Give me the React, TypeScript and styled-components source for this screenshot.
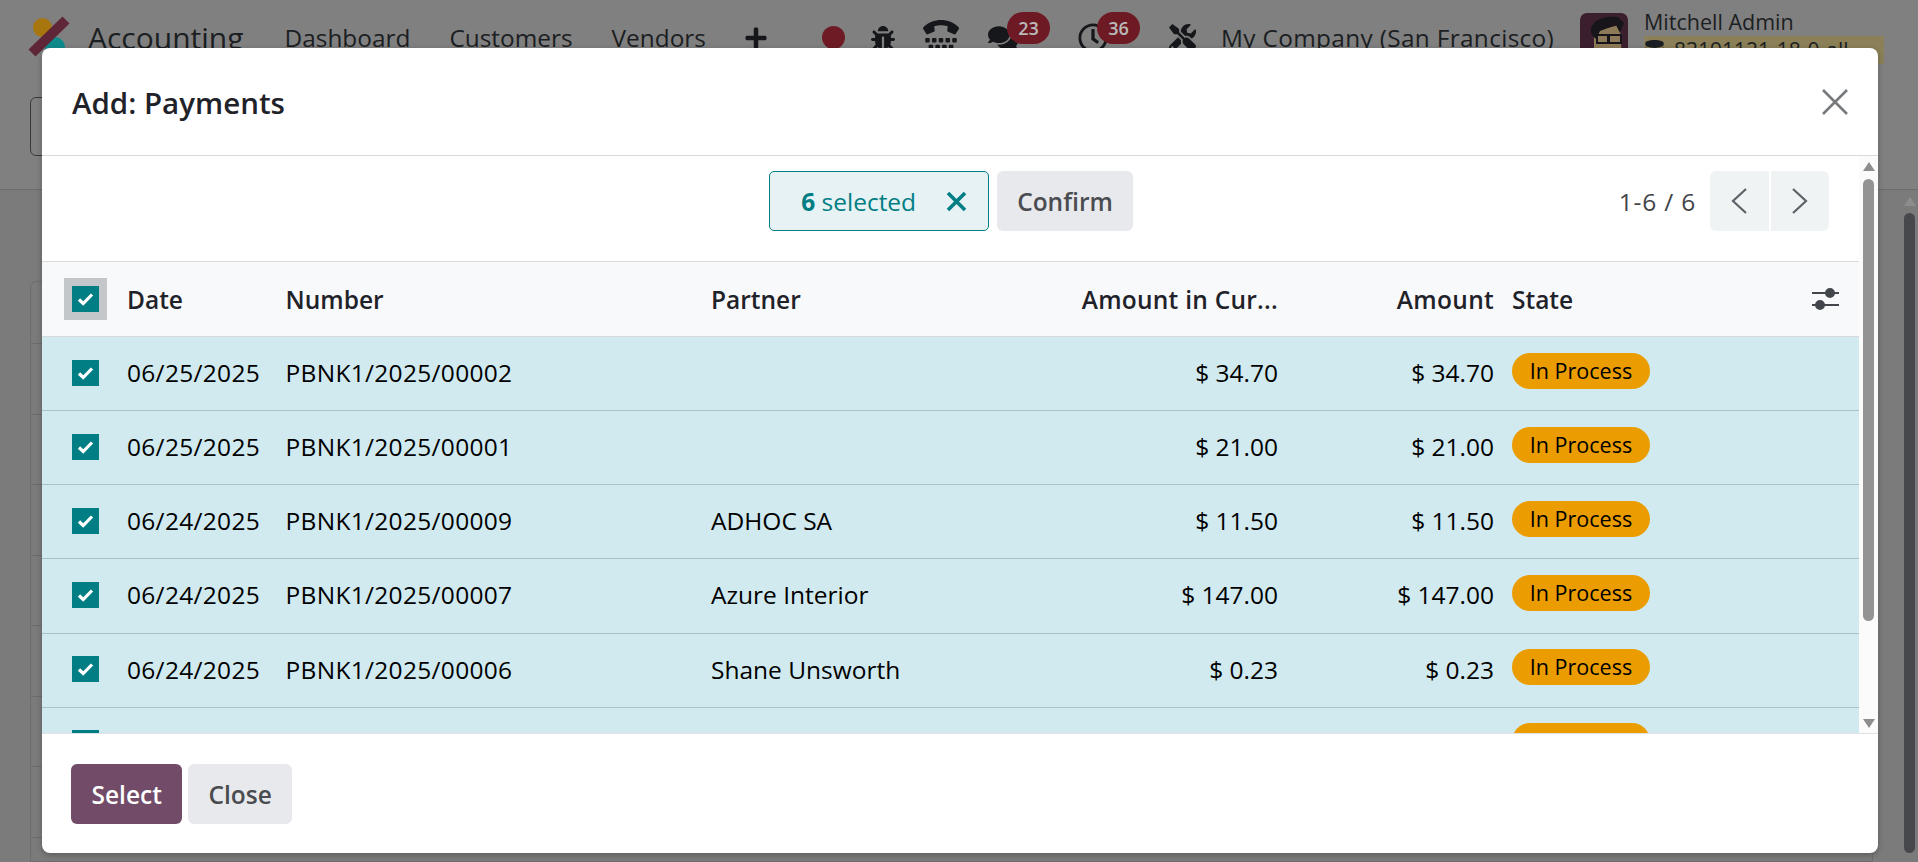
import styled, { createGlobalStyle } from 'styled-components';
import { FaBug, FaComments, FaDatabase, FaPlus, FaRegClock, FaTools, FaTty } from 'react-icons/fa';

type Payment = {
  id: number;
  date: string;
  number: string;
  partner: string;
  amount: string;
  state: string;
};

const payments: Payment[] = [
  { id: 1, date: '06/25/2025', number: 'PBNK1/2025/00002', partner: '', amount: '$ 34.70', state: 'In Process' },
  { id: 2, date: '06/25/2025', number: 'PBNK1/2025/00001', partner: '', amount: '$ 21.00', state: 'In Process' },
  { id: 3, date: '06/24/2025', number: 'PBNK1/2025/00009', partner: 'ADHOC SA', amount: '$ 11.50', state: 'In Process' },
  { id: 4, date: '06/24/2025', number: 'PBNK1/2025/00007', partner: 'Azure Interior', amount: '$ 147.00', state: 'In Process' },
  { id: 5, date: '06/24/2025', number: 'PBNK1/2025/00006', partner: 'Shane Unsworth', amount: '$ 0.23', state: 'In Process' },
  // only the top of this row shows above the footer
  { id: 6, date: '', number: '', partner: '', amount: '', state: '' },
];

const GlobalStyle = createGlobalStyle`
  html, body {
    margin: 0;
    padding: 0;
    overflow: hidden;
  }

  body {
    font-family: "Open Sans", "Noto Sans", sans-serif;
    font-size: 24.5px;
    color: #000;
  }

  * {
    box-sizing: border-box;
  }
`;

const Page = styled.div`
  position: relative;
  display: flex;
  flex-direction: column;
  width: 1918px;
  height: 862px;
  overflow: hidden;
  background: #808080;
`;

/* what sits dimmed behind the dialog */
const Navbar = styled.header`
  display: flex;
  flex: none;
  align-items: center;
  height: 75px;
  color: #1b1e22;
  font-size: 24.4px;
  white-space: nowrap;
`;

const AppLogo = styled.svg`
  flex: none;
  width: 44px;
  height: 50px;
  margin-left: 28px;
`;

const AppName = styled.span`
  margin: 0 41px 0 16px;
  font-size: 30px;
`;

const NavLink = styled.span`
  margin-right: 39px;
`;

const NavIcon = styled.span<{ $width: number; $gap: number; $size: number }>`
  position: relative;
  display: flex;
  flex: none;
  justify-content: center;
  width: ${({ $width }) => $width}px;
  margin-right: ${({ $gap }) => $gap}px;
  color: #15171a;
  font-size: ${({ $size }) => $size}px;
`;

const RecordDot = styled.span`
  width: 23px;
  height: 23px;
  border-radius: 50%;
  background: #6e1b25;
`;

const CountBadge = styled.span<{ $left: number }>`
  position: absolute;
  top: -11px;
  left: ${({ $left }) => $left}px;
  width: 43px;
  height: 32px;
  border-radius: 16px;
  background: #6e1a24;
  color: #b9b9b9;
  font-size: 18px;
  font-weight: 600;
  line-height: 32px;
  text-align: center;
`;

const CompanyName = styled.span`
  width: 359px;
  letter-spacing: 0.33px;
`;

const Avatar = styled.svg`
  flex: none;
  align-self: flex-start;
  width: 48px;
  height: 48px;
  margin-top: 13px;
`;

const UserBlock = styled.div`
  display: flex;
  flex-direction: column;
  align-self: flex-start;
  margin: 8px 0 0 16px;
  font-size: 21.5px;
  line-height: 28px;
`;

const DatabaseTag = styled.span`
  display: flex;
  align-items: center;
  gap: 9px;
  width: 240px;
  background: #8b8058;
  font-size: 21px;
`;

const ControlPanel = styled.div`
  flex: none;
  height: 115px;
  padding: 22px 0 0 30px;
  border-bottom: 1px solid #6c6c6c;
`;

const SearchBox = styled.div`
  width: 200px;
  height: 59px;
  border: 1px solid #3a3a3a;
  border-radius: 6px;
`;

const Content = styled.div`
  display: flex;
  flex: 1;
  min-height: 0;
  background: #7b7b7b;
`;

const BackList = styled.div`
  flex: 1;
  margin: 91px 30px 0;
  border: 1px solid #6d6d6d;
  border-radius: 6px 0 0 0;
`;

const BackRow = styled.div<{ $head?: boolean }>`
  height: ${({ $head }) => ($head ? 62 : 70.5)}px;
  border-bottom: 1px solid #6d6d6d;
`;

const OuterScrollbar = styled.div`
  display: flex;
  flex: none;
  flex-direction: column;
  align-items: center;
  width: 13px;
  margin-right: 2px;
  padding-top: 7px;
`;

const OuterThumb = styled.div`
  width: 11px;
  height: 640px;
  margin-top: 7px;
  border-radius: 6px;
  background: #47484c;
`;

/* the dialog */
const Modal = styled.section`
  position: absolute;
  top: 48px;
  left: 42px;
  display: flex;
  flex-direction: column;
  width: 1836px;
  height: 805px;
  overflow: hidden;
  border-radius: 8px;
  background: #fff;
  box-shadow: 0 2px 6px rgba(0, 0, 0, 0.25);
`;

const ModalHeader = styled.header`
  display: flex;
  flex: none;
  align-items: center;
  justify-content: space-between;
  height: 108px;
  padding: 0 30px 0 30px;
  border-bottom: 1px solid #d8dadd;
`;

const ModalTitle = styled.h4`
  margin: 1px 0 0;
  color: #1f2329;
  font-size: 29.5px;
  font-weight: 600;
`;

const CloseIcon = styled.svg`
  width: 26px;
  height: 26px;
  stroke: #777a7d;
  stroke-width: 2.6;
`;

const ModalBody = styled.div`
  display: flex;
  flex: 1;
  min-height: 0;
`;

const BodyScroll = styled.div`
  flex: 1;
  min-width: 0;
  overflow: hidden;
`;

const Toolbar = styled.div`
  display: grid;
  grid-template-columns: 1fr auto 1fr;
  align-items: start;
  height: 105px;
  padding: 15px 30px 0 0;
`;

const SelectionGroup = styled.div`
  display: flex;
  grid-column: 2;
  gap: 8px;
  margin-left: 31px;
`;

const SelectionChip = styled.div`
  display: flex;
  align-items: center;
  width: 220px;
  height: 60px;
  padding-left: 31px;
  border: 1px solid #017e84;
  border-radius: 5px;
  background: #e6f2f3;
  color: #017e84;
`;

const SelectionLabel = styled.span`
  width: 145px;
  b {
    font-weight: 700;
  }
`;

const ClearIcon = styled.svg`
  width: 21px;
  height: 21px;
  stroke: #017e84;
  stroke-width: 3.6;
`;

const Button = styled.button<{ $primary?: boolean }>`
  height: 60px;
  padding: 0 ${({ $primary }) => ($primary ? 20.5 : 20)}px;
  border: 0;
  border-radius: 6px;
  background: ${({ $primary }) => ($primary ? '#714b67' : '#e7e9ed')};
  color: ${({ $primary }) => ($primary ? '#fff' : '#4a4c50')};
  font-family: inherit;
  font-size: 24.5px;
  font-weight: 600;
`;

const Pager = styled.div`
  display: flex;
  grid-column: 3;
  align-items: center;
  justify-content: flex-end;
  color: #3f4448;
`;

const PagerCount = styled.span`
  margin-right: 14px;
  letter-spacing: 0.8px;
`;

const PagerButton = styled.button<{ $next?: boolean }>`
  display: flex;
  align-items: center;
  justify-content: center;
  width: 58.5px;
  height: 60px;
  margin-left: ${({ $next }) => ($next ? 2 : 0)}px;
  padding: 0;
  border: 0;
  border-radius: ${({ $next }) => ($next ? '0 6px 6px 0' : '6px 0 0 6px')};
  background: #f0f3f4;
`;

const Chevron = styled.svg`
  width: 17px;
  height: 26px;
  fill: none;
  stroke: #5c6268;
  stroke-width: 2.2;
`;

const gridColumns = '85px 158.5px 425.5px 300px 267px 216px 1fr 69px';

const HeaderRow = styled.div`
  display: grid;
  grid-template-columns: ${gridColumns};
  align-items: center;
  height: 76px;
  border-top: 1px solid #d8dadd;
  border-bottom: 1px solid #d8dadd;
  background: #f8f9fb;
  color: #1f2329;
  font-weight: 600;
`;

const DataRow = styled.div`
  display: grid;
  grid-template-columns: ${gridColumns};
  align-items: center;
  height: 74.15px;
  padding-bottom: 2px;
  border-bottom: 1px solid #a6c3cb;
  background: #d1eaef;
`;

const CheckCell = styled.div`
  display: flex;
  padding-left: 30px;
`;

const Checkbox = styled.span<{ $focused?: boolean }>`
  display: flex;
  align-items: center;
  justify-content: center;
  width: 27px;
  height: 26px;
  background: #017e84;
  box-shadow: ${({ $focused }) => ($focused ? '0 0 0 8px #c3c7c9' : 'none')};
`;

const CheckMark = styled.svg`
  width: 17px;
  height: 14px;
  fill: none;
  stroke: #fff;
  stroke-width: 3.2;
`;

const Cell = styled.div<{ $right?: boolean; $spacing?: number }>`
  letter-spacing: ${({ $spacing = 0 }) => $spacing}px;
  text-align: ${({ $right }) => ($right ? 'right' : 'left')};
  white-space: nowrap;
`;

const StateCell = styled.div`
  display: flex;
  padding: 0 0 0 18px;
`;

const StateBadge = styled.span`
  width: 138px;
  height: 36px;
  margin-bottom: 4px;
  border-radius: 18px;
  background: #ea9c00;
  color: #000;
  font-size: 21.5px;
  font-weight: 500;
  line-height: 35px;
  text-align: center;
`;

const OptionalCell = styled.div`
  display: flex;
  justify-content: center;
  padding-left: 1px;
`;

const ColumnsIcon = styled.svg`
  width: 27px;
  height: 24px;
  stroke: #43474c;
  stroke-width: 2;
  fill: #43474c;
`;

const InnerScrollbar = styled.div`
  display: flex;
  flex: none;
  flex-direction: column;
  align-items: center;
  justify-content: space-between;
  width: 19px;
  padding: 6px 0 5px;
  background: #fbfbfb;
`;

const Arrow = styled.span<{ $down?: boolean }>`
  width: 0;
  height: 0;
  border-right: 6px solid transparent;
  border-left: 6px solid transparent;
  ${({ $down }) => ($down ? 'border-top' : 'border-bottom')}: 9px solid #8d8d8d;
`;

const InnerThumb = styled.div`
  flex: none;
  width: 11px;
  height: 442px;
  margin: 8px 0 auto;
  border-radius: 6px;
  background: #939393;
`;

const ModalFooter = styled.footer`
  display: flex;
  flex: none;
  gap: 6px;
  align-items: flex-start;
  height: 120px;
  padding: 30px 29px 0;
  border-top: 1px solid #dfe1e4;
`;

const TickBox = ({ focused }: { focused?: boolean }) => (
  <CheckCell>
    <Checkbox $focused={focused}>
      <CheckMark viewBox="0 0 17 14">
        <path d="M2 7.5l4.2 4L15 2.5" />
      </CheckMark>
    </Checkbox>
  </CheckCell>
);

const App = () => (
  <Page>
    <GlobalStyle />
    <Navbar>
      <AppLogo viewBox="0 0 44 50">
        <circle cx="14.5" cy="14.5" r="9.5" fill="#a8760f" />
        <circle cx="27" cy="34" r="10" fill="#0f8a8c" />
        <path d="M4 40L38 7" stroke="#5f2638" strokeWidth="10" />
      </AppLogo>
      <AppName>Accounting</AppName>
      <NavLink>Dashboard</NavLink>
      <NavLink>Customers</NavLink>
      <NavLink>Vendors</NavLink>
      <NavIcon $width={22} $gap={55} $size={24}>
        <FaPlus />
      </NavIcon>
      <NavIcon $width={24} $gap={24} $size={27}>
        <RecordDot />
      </NavIcon>
      <NavIcon $width={26} $gap={27} $size={24}>
        <FaBug />
      </NavIcon>
      <NavIcon $width={37} $gap={25} $size={36}>
        <FaTty />
      </NavIcon>
      <NavIcon $width={36} $gap={57} $size={30}>
        <FaComments />
        <CountBadge $left={22}>23</CountBadge>
      </NavIcon>
      <NavIcon $width={30} $gap={60} $size={30}>
        <FaRegClock />
        <CountBadge $left={19}>36</CountBadge>
      </NavIcon>
      <NavIcon $width={29} $gap={24} $size={27}>
        <FaTools />
      </NavIcon>
      <CompanyName>My Company (San Francisco)</CompanyName>
      <Avatar viewBox="0 0 48 48">
        <rect width="48" height="48" rx="7" fill="#3b1f2e" />
        <path d="M14 18L40 12l2 36H14z" fill="#8d7a58" />
        <path d="M12 22C7 9 22 2 38 4l6 6-4 10-4-8-16 6-4 8z" fill="#17151a" />
        <path d="M17 22h11v8H17zM29 22h12v8H29z" fill="none" stroke="#17151a" strokeWidth="2" />
      </Avatar>
      <UserBlock>
        <span>Mitchell Admin</span>
        <DatabaseTag>
          <FaDatabase />
          83191121-18-0-all
        </DatabaseTag>
      </UserBlock>
    </Navbar>
    <ControlPanel>
      <SearchBox />
    </ControlPanel>
    <Content>
      <BackList>
        <BackRow $head />
        {Array.from({ length: 8 }, (_, i) => (
          <BackRow key={i} />
        ))}
      </BackList>
      <OuterScrollbar>
        <Arrow />
        <OuterThumb />
      </OuterScrollbar>
    </Content>

    <Modal>
      <ModalHeader>
        <ModalTitle>Add: Payments</ModalTitle>
        <CloseIcon viewBox="0 0 26 26">
          <path d="M1 1l24 24M25 1L1 25" />
        </CloseIcon>
      </ModalHeader>
      <ModalBody>
        <BodyScroll>
          <Toolbar>
            <SelectionGroup>
              <SelectionChip>
                <SelectionLabel>
                  <b>6</b> selected
                </SelectionLabel>
                <ClearIcon viewBox="0 0 21 21">
                  <path d="M2 2l17 17M19 2L2 19" />
                </ClearIcon>
              </SelectionChip>
              <Button>Confirm</Button>
            </SelectionGroup>
            <Pager>
              <PagerCount>1-6 / 6</PagerCount>
              <PagerButton>
                <Chevron viewBox="0 0 17 26">
                  <path d="M15 1L2 13l13 12" />
                </Chevron>
              </PagerButton>
              <PagerButton $next>
                <Chevron viewBox="0 0 17 26">
                  <path d="M2 1l13 12L2 25" />
                </Chevron>
              </PagerButton>
            </Pager>
          </Toolbar>
          <HeaderRow>
            <TickBox focused />
            <Cell>Date</Cell>
            <Cell>Number</Cell>
            <Cell>Partner</Cell>
            <Cell $right $spacing={0.25}>Amount in Cur...</Cell>
            <Cell $right $spacing={0.3}>Amount</Cell>
            <StateCell>State</StateCell>
            <OptionalCell>
              <ColumnsIcon viewBox="0 0 27 24">
                <path d="M0 6h27M0 18h27" fill="none" />
                <circle cx="18" cy="6" r="4" />
                <circle cx="8" cy="18" r="4" />
              </ColumnsIcon>
            </OptionalCell>
          </HeaderRow>
          {payments.map((p) => (
            <DataRow key={p.id}>
              <TickBox />
              <Cell $spacing={0.3}>{p.date}</Cell>
              <Cell $spacing={0.3}>{p.number}</Cell>
              <Cell>{p.partner}</Cell>
              <Cell $right>{p.amount}</Cell>
              <Cell $right>{p.amount}</Cell>
              <StateCell>
                <StateBadge>{p.state}</StateBadge>
              </StateCell>
              <div />
            </DataRow>
          ))}
        </BodyScroll>
        <InnerScrollbar>
          <Arrow />
          <InnerThumb />
          <Arrow $down />
        </InnerScrollbar>
      </ModalBody>
      <ModalFooter>
        <Button $primary>Select</Button>
        <Button>Close</Button>
      </ModalFooter>
    </Modal>
  </Page>
);

export default App;
